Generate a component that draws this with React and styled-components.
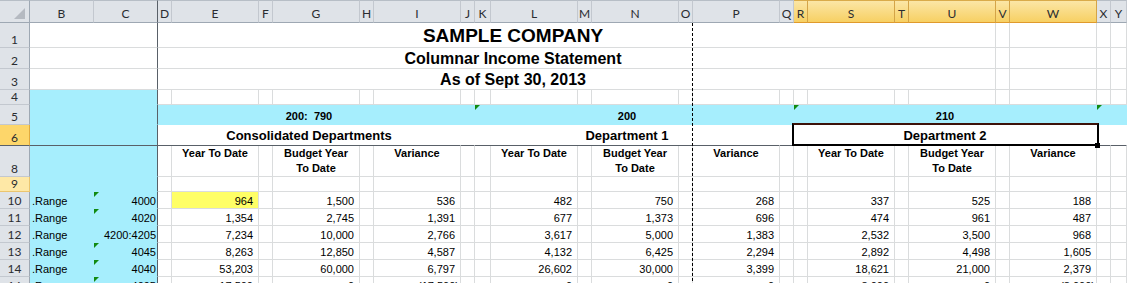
import React from 'react';
import styled, { createGlobalStyle } from 'styled-components';

const GRID = '#dadcdd';
const FREEZE = '#596068';
const CYAN = '#a6eefd';
const YELLOW = '#ffff66';
const HEAD_BG = '#dfe3e8';
const HEAD_LINE = '#c3c8cf';
const HEAD_EDGE = '#9ea8b3';

const COLS = [
  ['B', 64], ['C', 64], ['D', 14], ['E', 87], ['F', 14], ['G', 87], ['H', 14], ['I', 87],
  ['J', 14], ['K', 16], ['L', 87], ['M', 14], ['N', 87], ['O', 14], ['P', 87], ['Q', 14],
  ['R', 14], ['S', 87], ['T', 14], ['U', 87], ['V', 14], ['W', 87], ['X', 14], ['Y', 16],
];
const RIGHT_COLS = COLS.slice(2).map((c) => c[0]);
const SELECTED = ['R', 'S', 'T', 'U', 'V', 'W'];
const NUM_COLS = ['E', 'G', 'I', 'L', 'N', 'P', 'S', 'U', 'W'];
const LABELS = {
  E: 'Year To Date', G: 'Budget Year\nTo Date', I: 'Variance',
  L: 'Year To Date', N: 'Budget Year\nTo Date', P: 'Variance',
  S: 'Year To Date', U: 'Budget Year\nTo Date', W: 'Variance',
};

const DATA = [
  { n: 10, code: '4000', tri: true, hl: true, v: ['964', '1,500', '536', '482', '750', '268', '337', '525', '188'] },
  { n: 11, code: '4020', tri: true, v: ['1,354', '2,745', '1,391', '677', '1,373', '696', '474', '961', '487'] },
  { n: 12, code: '4200:4205', v: ['7,234', '10,000', '2,766', '3,617', '5,000', '1,383', '2,532', '3,500', '968'] },
  { n: 13, code: '4045', tri: true, v: ['8,263', '12,850', '4,587', '4,132', '6,425', '2,294', '2,892', '4,498', '1,605'] },
  { n: 14, code: '4040', tri: true, v: ['53,203', '60,000', '6,797', '26,602', '30,000', '3,399', '18,621', '21,000', '2,379'] },
  { n: 16, code: '4095', tri: true, v: ['17,500', '0', '(17,500)', '0', '0', '0', '8,000', '0', '(8,000)'] },
];

const GlobalStyle = createGlobalStyle`
  html, body { margin: 0; padding: 0; background: #fff; }
  body { width: 1127px; height: 283px; overflow: hidden; }
`;

const Sheet = styled.div`
  position: relative;
  display: grid;
  grid-template-columns: 30px ${COLS.map((c) => `${c[1]}px`).join(' ')};
  grid-template-rows: 23px 25px 21px 21px 15px 20px 21px 31px 15px repeat(6, 17px);
  width: 1127px;
  height: 283px;
  overflow: hidden;
  background: #fff;
  font-family: "Liberation Sans", Arial, sans-serif;
  color: #000;
`;

const HeadBase = styled.div`
  box-sizing: border-box;
  display: flex;
  justify-content: center;
  align-items: flex-end;
  overflow: hidden;
  font-family: Lato, "Noto Sans", sans-serif;
  font-size: 12px;
  line-height: 13px;
  color: #2a2c30;
`;

const Corner = styled(HeadBase)`
  background: ${HEAD_BG};
  border-top: 1px solid #b7bec6;
  border-bottom: 1px solid ${HEAD_EDGE};
  border-right: 1px solid ${HEAD_EDGE};
  align-items: stretch;
`;

const ColHead = styled(HeadBase)`
  padding-bottom: 2px;
  border-top: 1px solid ${(p) => (p.$sel ? '#d9ab4a' : '#b7bec6')};
  border-bottom: 1px solid ${(p) => (p.$sel ? '#e09a2c' : HEAD_EDGE)};
  border-right: 1px solid ${(p) => (p.$freeze ? FREEZE : p.$sel ? '#d4a447' : HEAD_LINE)};
  background: ${(p) => (p.$sel ? 'linear-gradient(#fbe6a6, #f7d063)' : HEAD_BG)};
`;

const rowHeadBg = { sel: '#fdd66a', soft: '#fee8a6' };
const rowHeadLine = { sel: '#e1aa3e', soft: '#ebc56f' };

const RowHead = styled(HeadBase)`
  padding-bottom: 1px;
  background: ${(p) => rowHeadBg[p.$state] || HEAD_BG};
  border-right: 1px solid ${(p) => rowHeadLine[p.$state] || HEAD_EDGE};
  border-bottom: 1px solid ${(p) => (p.$freeze ? FREEZE : rowHeadLine[p.$state] || HEAD_LINE)};
`;

const edge = (kind, fill) => (kind === 'freeze' ? FREEZE : kind === 'grid' ? GRID : fill);

const Cell = styled.div`
  box-sizing: border-box;
  position: relative;
  display: flex;
  min-width: 0;
  overflow: hidden;
  white-space: pre;
  grid-column: span ${(p) => p.$span || 1};
  background: ${(p) => p.$fill || '#fff'};
  border-right: 1px solid ${(p) => edge(p.$r || 'grid', p.$fill || '#fff')};
  border-bottom: 1px solid ${(p) => edge(p.$b || 'grid', p.$fill || '#fff')};
`;

const TitleCell = styled(Cell)`
  justify-content: center;
  align-items: flex-end;
  padding-right: 127px;
  font-weight: bold;
  font-size: ${(p) => (p.$big ? 19 : 16)}px;
  line-height: ${(p) => (p.$big ? 22 : 18)}px;
`;

const BandCell = styled(Cell)`
  justify-content: center;
  align-items: flex-end;
  padding-bottom: 1px;
  font-weight: bold;
  font-size: 11px;
  line-height: 13px;
`;

const DeptCell = styled(Cell)`
  justify-content: center;
  align-items: center;
  overflow: visible;
  font-weight: bold;
  font-size: 13px;
  line-height: 15px;
`;

const ColLabel = styled(Cell)`
  justify-content: center;
  align-items: flex-start;
  text-align: center;
  white-space: pre-line;
  font-weight: bold;
  font-size: 11px;
  line-height: 15px;
`;

const NameCell = styled(Cell)`
  justify-content: flex-start;
  align-items: flex-end;
  padding-left: 2px;
  font-size: 11px;
  line-height: 13px;
`;

const CodeCell = styled(Cell)`
  justify-content: flex-end;
  align-items: flex-end;
  padding-right: 1px;
  font-size: 11px;
  line-height: 13px;
`;

const NumCell = styled(Cell)`
  justify-content: flex-end;
  align-items: flex-end;
  padding-right: ${(p) => (p.$neg ? 1 : 5)}px;
  font-size: 11px;
  line-height: 13px;
`;

const Triangle = styled.span`
  position: absolute;
  left: 0;
  top: 0;
  width: 0;
  height: 0;
  border-top: 5px solid #118a11;
  border-right: 5px solid transparent;
`;

const SelectionFrame = styled.span`
  position: absolute;
  left: -2px;
  right: -3px;
  top: -2px;
  bottom: -1px;
  border: 2px solid #000;
  border-top-color: #3d1209;
  z-index: 2;
  pointer-events: none;
`;

const FillHandle = styled.span`
  position: absolute;
  right: -4px;
  bottom: -3px;
  width: 5px;
  height: 5px;
  background: #000;
  z-index: 3;
`;

const PageBreak = styled.div`
  position: absolute;
  left: 692px;
  top: 23px;
  bottom: 0;
  width: 1px;
  background: repeating-linear-gradient(to bottom, #000 0 3px, transparent 3px 5px);
  z-index: 1;
`;

const CornerMark = () => (
  <svg width="29" height="21" viewBox="0 0 29 21">
    <polygon points="14,18 25,18 25,7" fill="#b5bac1" />
  </svg>
);

const LeftBand = ({ r = 'freeze', b = 'none' }) => (
  <Cell $span={2} $fill={CYAN} $r={r} $b={b} />
);

const PlainCells = ({ cols, row }) =>
  cols.map((c) => <Cell key={`${row}-${c}`} />);

export default function App() {
  const rows = [];

  rows.push(
    <Corner key="corner">
      <CornerMark />
    </Corner>
  );
  COLS.forEach(([c]) =>
    rows.push(
      <ColHead key={`h-${c}`} $sel={SELECTED.includes(c)} $freeze={c === 'C'}>
        {c}
      </ColHead>
    )
  );

  const titles = ['SAMPLE COMPANY', 'Columnar Income Statement', 'As of Sept 30, 2013'];
  titles.forEach((t, i) => {
    rows.push(<RowHead key={`rh-${i + 1}`}>{i + 1}</RowHead>);
    rows.push(<Cell key={`bc-${i}`} $span={2} $r="freeze" />);
    rows.push(
      <TitleCell key={`t-${i}`} $span={18} $big={i === 0}>
        {t}
      </TitleCell>
    );
    rows.push(<PlainCells key={`tp-${i}`} cols={['V', 'W', 'X', 'Y']} row={`t${i}`} />);
  });

  rows.push(<RowHead key="rh-4">4</RowHead>);
  rows.push(<LeftBand key="lb-4" />);
  rows.push(<PlainCells key="p-4" cols={RIGHT_COLS} row="r4" />);

  rows.push(<RowHead key="rh-5">5</RowHead>);
  rows.push(<LeftBand key="lb-5" />);
  const band = [
    { span: 6, text: '200:  790' },
    { span: 1 },
    { span: 6, text: '200', tri: true },
    { span: 1 },
    { span: 6, text: '210', tri: true },
    { span: 1, tri: true },
    { span: 1 },
  ];
  band.forEach((b, i) =>
    rows.push(
      <BandCell key={`b5-${i}`} $span={b.span} $fill={CYAN} $r="none" $b="none">
        {b.tri && <Triangle />}
        {b.text}
      </BandCell>
    )
  );

  rows.push(
    <RowHead key="rh-6" $state="sel" $freeze>
      6
    </RowHead>
  );
  rows.push(<LeftBand key="lb-6" b="freeze" />);
  const depts = [
    { span: 6, text: 'Consolidated Departments' },
    { span: 1 },
    { span: 6, text: 'Department 1' },
    { span: 1 },
    { span: 6, text: 'Department 2', sel: true },
    { span: 1 },
    { span: 1 },
  ];
  depts.forEach((d, i) =>
    rows.push(
      <DeptCell key={`d6-${i}`} $span={d.span} $r="none" $b="freeze">
        {d.text}
        {d.sel && <SelectionFrame />}
        {d.sel && <FillHandle />}
      </DeptCell>
    )
  );

  rows.push(<RowHead key="rh-8">8</RowHead>);
  rows.push(<LeftBand key="lb-8" />);
  RIGHT_COLS.forEach((c) =>
    rows.push(
      LABELS[c] ? <ColLabel key={`l8-${c}`}>{LABELS[c]}</ColLabel> : <Cell key={`l8-${c}`} />
    )
  );

  rows.push(
    <RowHead key="rh-9" $state="soft">
      9
    </RowHead>
  );
  rows.push(<LeftBand key="lb-9" />);
  rows.push(<PlainCells key="p-9" cols={RIGHT_COLS} row="r9" />);

  DATA.forEach((r) => {
    rows.push(<RowHead key={`rh-${r.n}`}>{r.n}</RowHead>);
    rows.push(
      <NameCell key={`n-${r.n}`} $fill={CYAN} $r="none" $b="none">
        .Range
      </NameCell>
    );
    rows.push(
      <CodeCell key={`c-${r.n}`} $fill={CYAN} $r="freeze" $b="none">
        {r.tri && <Triangle />}
        {r.code}
      </CodeCell>
    );
    RIGHT_COLS.forEach((c) => {
      const idx = NUM_COLS.indexOf(c);
      if (idx === -1) {
        rows.push(<Cell key={`v-${r.n}-${c}`} />);
      } else {
        const val = r.v[idx];
        rows.push(
          <NumCell
            key={`v-${r.n}-${c}`}
            $neg={val.startsWith('(')}
            $fill={r.hl && c === 'E' ? YELLOW : undefined}
          >
            {val}
          </NumCell>
        );
      }
    });
  });

  return (
    <>
      <GlobalStyle />
      <Sheet>
        {rows}
        <PageBreak />
      </Sheet>
    </>
  );
}
